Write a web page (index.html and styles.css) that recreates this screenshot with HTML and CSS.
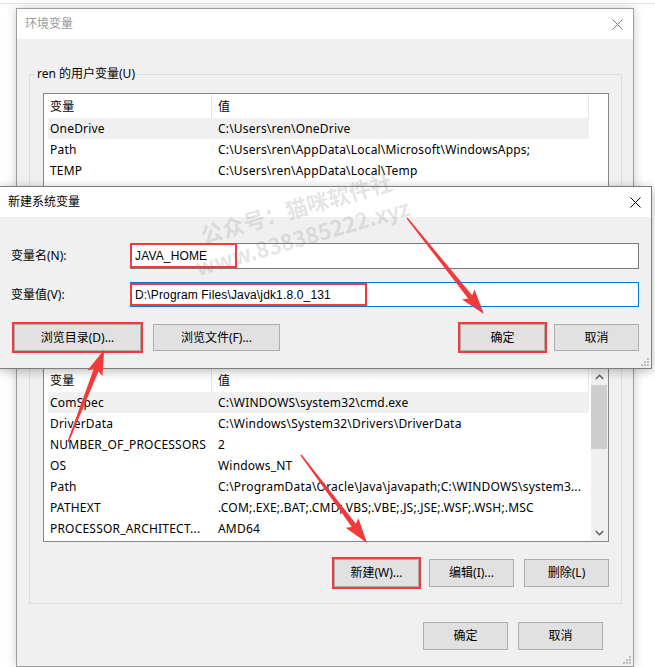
FILE: index.html
```html
<!DOCTYPE html>
<html lang="zh-CN">
<head>
<meta charset="utf-8">
<title>环境变量</title>
<link rel="stylesheet" href="styles.css">
</head>
<body>
<div class="topline"></div>

<div class="win outer">
  <div class="titlebar">
    <span class="title dim">环境变量</span>
    <svg class="close" width="11" height="11" viewBox="0 0 11 11"><path d="M0.5 0.5L10.5 10.5M10.5 0.5L0.5 10.5" stroke="#7a7a7a" stroke-width="1" fill="none"/></svg>
  </div>
  <div class="body">
    <fieldset class="group g1">
      <legend>ren 的用户变量(U)</legend>
      <div class="list ulist">
        <div class="lv">
          <div class="row head"><span class="c1">变量</span><span class="c2">值</span></div>
          <div class="row sel"><span class="c1">OneDrive</span><span class="c2">C:\Users\ren\OneDrive</span></div>
          <div class="row"><span class="c1">Path</span><span class="c2">C:\Users\ren\AppData\Local\Microsoft\WindowsApps;</span></div>
          <div class="row"><span class="c1">TEMP</span><span class="c2">C:\Users\ren\AppData\Local\Temp</span></div>
        </div>
      </div>
      <div class="btns">
        <button class="btn">新建(N)...</button>
        <button class="btn">编辑(E)...</button>
        <button class="btn">删除(D)</button>
      </div>
    </fieldset>

    <fieldset class="group g2">
      <div class="list slist">
        <div class="lv">
          <div class="row head"><span class="c1">变量</span><span class="c2">值</span></div>
          <div class="row sel"><span class="c1">ComSpec</span><span class="c2">C:\WINDOWS\system32\cmd.exe</span></div>
          <div class="row"><span class="c1">DriverData</span><span class="c2">C:\Windows\System32\Drivers\DriverData</span></div>
          <div class="row"><span class="c1">NUMBER_OF_PROCESSORS</span><span class="c2">2</span></div>
          <div class="row"><span class="c1">OS</span><span class="c2">Windows_NT</span></div>
          <div class="row"><span class="c1">Path</span><span class="c2">C:\ProgramData\Oracle\Java\javapath;C:\WINDOWS\system3...</span></div>
          <div class="row"><span class="c1">PATHEXT</span><span class="c2">.COM;.EXE;.BAT;.CMD;.VBS;.VBE;.JS;.JSE;.WSF;.WSH;.MSC</span></div>
          <div class="row"><span class="c1">PROCESSOR_ARCHITECT...</span><span class="c2">AMD64</span></div>
        </div>
        <div class="sb">
          <div class="sb-btn"><svg width="9" height="6" viewBox="0 0 9 6"><path d="M0.8 5L4.5 1.3L8.2 5" stroke="#606060" stroke-width="1.6" fill="none"/></svg></div>
          <div class="thumb"></div>
          <div class="track"></div>
          <div class="sb-btn"><svg width="9" height="6" viewBox="0 0 9 6"><path d="M0.8 1L4.5 4.7L8.2 1" stroke="#606060" stroke-width="1.6" fill="none"/></svg></div>
        </div>
      </div>
      <div class="btns btns2">
        <button class="btn mark">新建(W)...</button>
        <button class="btn">编辑(I)...</button>
        <button class="btn">删除(L)</button>
      </div>
    </fieldset>

    <div class="foot">
      <button class="btn">确定</button>
      <button class="btn">取消</button>
    </div>
  </div>
  <svg class="grip" width="8" height="8" viewBox="0 0 8 8"><g fill="#bcbcbc"><rect x="6" y="0" width="2" height="2"/><rect x="3" y="3" width="2" height="2"/><rect x="6" y="3" width="2" height="2"/><rect x="0" y="6" width="2" height="2"/><rect x="3" y="6" width="2" height="2"/><rect x="6" y="6" width="2" height="2"/></g></svg>
</div>

<div class="win dlg">
  <div class="titlebar">
    <span class="title">新建系统变量</span>
    <svg class="close" width="11" height="11" viewBox="0 0 11 11"><path d="M0.5 0.5L10.5 10.5M10.5 0.5L0.5 10.5" stroke="#000" stroke-width="1" fill="none"/></svg>
  </div>
  <div class="dbody">
    <div class="field">
      <label>变量名(N):</label>
      <div class="inp">JAVA_HOME<span class="redbox rb1"></span></div>
    </div>
    <div class="field f2">
      <label>变量值(V):</label>
      <div class="inp focus">D:\Program Files\Java\jdk1.8.0_131<span class="redbox rb2"></span></div>
    </div>
    <div class="dbtns">
      <div class="bgroup left">
        <button class="btn wide mark">浏览目录(D)...</button>
        <button class="btn wide">浏览文件(F)...</button>
      </div>
      <div class="bgroup right">
        <button class="btn mark">确定</button>
        <button class="btn">取消</button>
      </div>
    </div>
  </div>
  <svg class="grip" width="8" height="8" viewBox="0 0 8 8"><g fill="#bcbcbc"><rect x="6" y="0" width="2" height="2"/><rect x="3" y="3" width="2" height="2"/><rect x="6" y="3" width="2" height="2"/><rect x="0" y="6" width="2" height="2"/><rect x="3" y="6" width="2" height="2"/><rect x="6" y="6" width="2" height="2"/></g></svg>
</div>

<div class="wm wm1">公众号：猫咪软件社</div>
<div class="wm wm2">www.838385222.xyz</div>

<svg class="arrows" width="655" height="667" viewBox="0 0 655 667">
  <g fill="#f2393b">
    <g transform="translate(407 218) rotate(51.3)"><polygon points="0,-0.7 101,-2.6 98,-8 123,0 98,8 101,2.6 0,0.7"/></g>
    <g transform="translate(68 442) rotate(-68.6)"><polygon points="0,-0.7 77,-2.6 74,-8 99,0 74,8 77,2.6 0,0.7"/></g>
    <g transform="translate(301 455) rotate(53.1)"><polygon points="0,-0.7 88,-2.6 85,-8 110,0 85,8 88,2.6 0,0.7"/></g>
  </g>
</svg>
</body>
</html>
```

FILE: styles.css
```css
* { box-sizing: border-box; }
html, body { margin: 0; padding: 0; }
body {
  width: 655px;
  height: 667px;
  overflow: hidden;
  position: relative;
  background: #fff;
  font-family: "Noto Sans", "Noto Sans CJK SC", sans-serif;
  font-size: 12px;
  line-height: 16px;
  letter-spacing: 0.2px;
  color: #000;
}

.topline { height: 4px; border-bottom: 1px solid #e6e6e6; }

.win { background: #f0f0f0; }

.outer {
  margin: 4px 0 0 16px;
  width: 618px;
  height: 659px;
  border: 1px solid #9d9d9d;
  box-shadow: 0 0 10px rgba(0, 0, 0, 0.2);
  position: relative;
  display: flex;
  flex-direction: column;
}

.titlebar {
  height: 30px;
  flex: none;
  background: #fff;
  display: flex;
  align-items: center;
  justify-content: space-between;
  padding: 0 10px 0 8px;
}
.title { letter-spacing: 0; }
.title.dim { color: #9a9a9a; }

.outer .body {
  flex: 1;
  display: flex;
  flex-direction: column;
  padding: 0 11px 0 12px;
}

.group {
  border: 1px solid #dcdcdc;
  margin: 27px 0 0;
  padding: 11px 12px 14px 13px;
  min-width: 0;
}
.group legend {
  padding: 0 2px;
  margin-left: -8px;
  line-height: 16px;
  letter-spacing: 0;
}
.g2 { margin-top: 33px; padding-top: 18px; padding-bottom: 16px; }

.list {
  border: 1px solid #828790;
  background: #fff;
  display: flex;
  overflow: hidden;
}
.ulist { height: 168px; }
.slist { height: 175px; }

.lv { flex: 1; min-width: 0; padding-left: 4px; }
.row {
  display: flex;
  align-items: center;
  height: 21px;
  width: 541px;
  white-space: nowrap;
}
.row.head { height: 24px; align-items: stretch; }
.c1 { width: 164px; flex: none; padding-left: 2px; overflow: hidden; }
.c2 { width: 377px; flex: none; padding-left: 6px; overflow: hidden; }
.head .c1, .head .c2 {
  display: flex;
  align-items: center;
  padding-top: 2px;
  border-right: 1px solid #e5e5e5;
}
.sel { background: #f0f0f0; }

.sb {
  width: 17px;
  flex: none;
  margin-left: 1px;
  background: #f0f0f0;
  display: flex;
  flex-direction: column;
}
.sb-btn {
  height: 17px;
  flex: none;
  display: flex;
  align-items: center;
  justify-content: center;
}
.thumb { height: 64px; flex: none; background: #cdcdcd; margin: 0 1px 0 0; }
.track { flex: 1; }

.btns {
  display: flex;
  justify-content: flex-end;
  gap: 10px;
  margin-top: 11px;
}
.btns2 { margin-top: 17px; }

.btn {
  width: 85px;
  height: 28px;
  padding: 0;
  background: #e1e1e1;
  border: 1px solid #adadad;
  font: inherit;
  letter-spacing: 0;
  color: #000;
  border-radius: 0;
}
.btn.wide { width: 127px; height: 27px; }
.mark { outline: 2px solid #ef3b3b; outline-offset: 0; }

.foot {
  display: flex;
  justify-content: flex-end;
  gap: 10px;
  margin-top: 18px;
  padding-right: 19px;
}

.grip { position: absolute; right: 2px; bottom: 2px; }

/* new variable dialog */
.dlg {
  position: absolute;
  left: -1px;
  top: 186px;
  width: 653px;
  height: 183px;
  border: 1px solid #7d7d7d;
  box-shadow: 0 2px 10px rgba(0, 0, 0, 0.28);
  display: flex;
  flex-direction: column;
}
.dlg .titlebar { padding: 0 10px 0 8px; }
.dbody { flex: 1; padding: 26px 12px 0 0; }

.field { display: flex; align-items: center; height: 26px; }
.field.f2 { height: 25px; margin-top: 13px; }
.field label { width: 130px; flex: none; padding-left: 11px; letter-spacing: 0; }
.inp {
  position: relative;
  flex: 1;
  height: 100%;
  border: 1px solid #7a7a7a;
  background: #fff;
  padding-left: 4px;
  display: flex;
  align-items: center;
  white-space: nowrap;
  font-family: "Liberation Sans", "Noto Sans", sans-serif;
  letter-spacing: 0.15px;
}
.inp.focus { border-color: #0078d7; }
.redbox { position: absolute; border: 2px solid #ef3b3b; }
.rb1 { left: -1px; top: -1px; width: 107px; height: 25px; }
.rb2 { left: -1px; top: 0; width: 237px; height: 23px; }

.dbtns {
  display: flex;
  justify-content: space-between;
  margin-top: 17px;
  padding-left: 14px;
}
.bgroup { display: flex; }
.bgroup.left { gap: 12px; }
.bgroup.right { gap: 9px; }
.dbtns .btn { height: 27px; }

/* watermark */
.wm {
  position: absolute;
  color: rgba(120, 120, 120, 0.2);
  font-family: "Noto Sans CJK SC", sans-serif;
  font-weight: 700;
  font-size: 22px;
  line-height: 24px;
  letter-spacing: 0;
  white-space: nowrap;
  transform: translate(-50%, -50%) rotate(-16deg);
}
.wm1 { left: 296px; top: 207px; }
.wm2 { left: 302px; top: 236px; }

.arrows { position: absolute; left: 0; top: 0; pointer-events: none; }
```
